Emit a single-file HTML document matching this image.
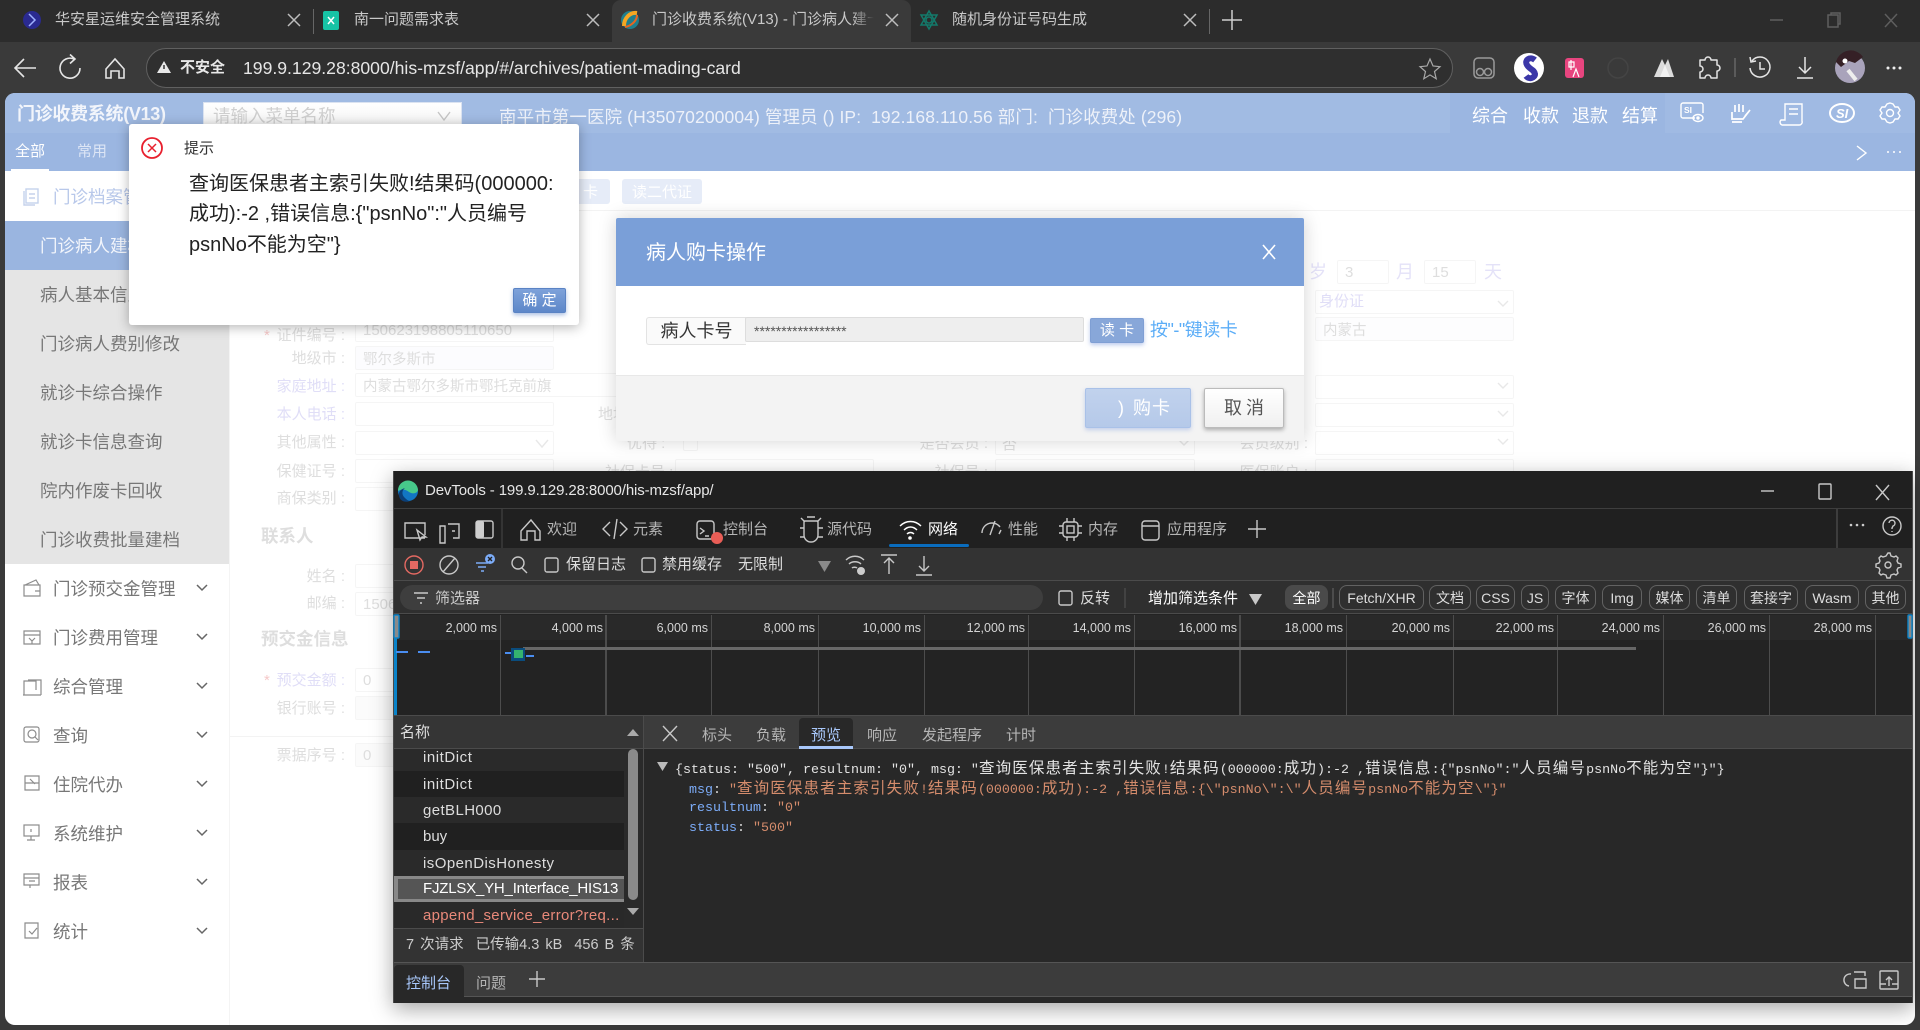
<!DOCTYPE html>
<html lang="zh-CN"><head><meta charset="utf-8"><title>门诊收费系统(V13)</title>
<style>
*{box-sizing:border-box}
html,body{margin:0;width:1920px;height:1030px;overflow:hidden;background:#3a3a3a;font-family:"Liberation Sans","Noto Sans CJK SC",sans-serif}
.t,.r,.b{position:absolute;white-space:nowrap;line-height:20px}
.b{display:block}
.r{text-align:right}
.sv{position:absolute;left:0;top:0;width:1920px;height:1030px}
.m{font-family:"Liberation Mono","Noto Sans CJK SC",monospace;font-size:13.33px}
.c{font-size:15.5px;letter-spacing:1.13px}
.in{position:absolute;border:1px solid #f5f5f5;border-radius:2px;height:24px}
.lb{position:absolute;white-space:nowrap;line-height:20px;color:#dedede;font-size:15px;text-align:right;width:110px}
.pu{color:#e0def7}
.sb{position:absolute;left:40px;font-size:17.5px;color:#777;white-space:nowrap;line-height:20px}
.st{position:absolute;left:53px;font-size:17.5px;color:#777;white-space:nowrap;line-height:20px}
.tab{position:absolute;font-size:15px;color:#c9c9c9;white-space:nowrap;line-height:20px}
.chip{position:absolute;top:585px;height:25px;border:1px solid #626262;border-radius:8px;color:#ddd;font-size:14px;line-height:25px;text-align:center;white-space:nowrap}
.rw{position:absolute;left:394px;width:230px;height:26px;font-size:15px;line-height:27px;padding-left:29px;color:#ddd;white-space:nowrap;overflow:hidden}
.dt{position:absolute;font-size:15px;color:#b5b5b5;white-space:nowrap;line-height:20px}
</style></head><body>

<!-- browser chrome -->
<div class="b" style="left:0;top:0;width:1920px;height:42px;background:#2c2c2c"></div>
<div class="b" style="left:612px;top:0;width:299px;height:42px;background:#3a3a3a;border-radius:9px 9px 0 0"></div>
<div class="b" style="left:313px;top:9px;width:1px;height:25px;background:#666"></div>
<div class="b" style="left:1209px;top:9px;width:1px;height:25px;background:#666"></div>
<span class="tab" style="left:55px;top:10px">华安星运维安全管理系统</span>
<span class="tab" style="left:354px;top:10px">南一问题需求表</span>
<span class="tab" style="left:652px;top:10px;width:222px;overflow:hidden;-webkit-mask-image:linear-gradient(90deg,#000 90%,transparent)">门诊收费系统(V13) - 门诊病人建卡</span>
<span class="tab" style="left:952px;top:10px">随机身份证号码生成</span>
<div class="b" style="left:146px;top:48px;width:1307px;height:40px;border:1.5px solid #606060;border-radius:20px;background:#2f2f2f"></div>
<span class="t" style="left:180px;top:58px;font-size:15px;font-weight:bold;color:#e8e8e8">不安全</span>
<span class="t" style="left:243px;top:58px;font-size:17.6px;color:#e6e6e6">199.9.129.28:8000/his-mzsf/app/#/archives/patient-mading-card</span>

<svg class="sv" viewBox="0 0 1920 1030" fill="none" stroke="#cfcfcf" stroke-width="1.5">
<circle cx="32" cy="20" r="9" fill="#2a2a90" stroke="none"/><path d="M29 14l6 6-6 6" stroke="#9fb0ff"/>
<path d="M288 14l12 12M300 14l-12 12M587 14l12 12M599 14l-12 12M886 14l12 12M898 14l-12 12M1184 14l12 12M1196 14l-12 12" stroke="#bdbdbd"/>
<rect x="323" y="11" width="16" height="19" rx="2" fill="#17c3a5" stroke="none"/><path d="M328 17l6 7M334 17l-6 7" stroke="#fff"/>
<circle cx="630" cy="20" r="9" fill="#1f7f8d" stroke="none"/><path d="M624 26c0-8 6-14 13-13" stroke="#f5a623" stroke-width="4"/><path d="M637 15c0 6-6 11-12 12" stroke="#e9641f" stroke-width="2"/>
<g stroke="#137a6b"><path d="M929 11l8 14h-16zM929 29l8-14h-16z"/><circle cx="929" cy="20" r="3"/></g>
<path d="M1232 10v20M1222 20h20" stroke-width="1.5"/>
<g stroke="#5e5e5e"><path d="M1770 20h13"/><rect x="1828" y="15" width="10" height="12"/><path d="M1831 15v-2h9v11h-2M1885 14l12 13M1897 14l-12 13"/></g>
<!-- nav -->
<path d="M36 68H16M24 59l-9 9 9 9" stroke="#e5e5e5" stroke-width="1.6"/>
<path d="M74 59A10 10 0 1 0 80 68M70 54.500l5 4.500-5 4.500" stroke="#e5e5e5" stroke-width="1.6"/>
<path d="M106 69l9-10 9 10v9h-5v-7h-8v7h-5z" stroke="#e5e5e5" stroke-width="1.6"/>
<path d="M164 61l7 12h-14z" fill="#e8e8e8" stroke="none"/><path d="M164 65v4" stroke="#333"/>
<path d="M1430 59l3 7 7 .7-5.500 4.800 1.700 7.200-6.200-3.800-6.200 3.800 1.700-7.200-5.500-4.800 7-.7z" stroke="#a8a8a8" stroke-width="1.2"/>
<rect x="1474" y="58" width="20" height="20" rx="4" stroke="#9a9a9a"/><circle cx="1480" cy="72" r="3.500" stroke="#9a9a9a"/><circle cx="1488" cy="72" r="3.500" stroke="#9a9a9a"/>
<circle cx="1529" cy="68" r="15" fill="#fff" stroke="none"/><path d="M1535 60c-5-4-11 0-8 5s7 4 8 9c0 4-6 6-9 2" stroke="#3b37a8" stroke-width="6"/>
<rect x="1565" y="58" width="19" height="20" rx="3" fill="#e8457f" stroke="none"/><path d="M1569 62h5v5h-5zM1571 60v10M1573 77l3-8 3 8" stroke="#fff" stroke-width="1.2"/>
<circle cx="1618" cy="68" r="10" stroke="#444"/>
<path d="M1654 77L1662 59L1665 65L1668 59L1674 77z" fill="#dcdcdc" stroke="none"/><path d="M1665 65l-5 12h10z" fill="#f2f2f2" stroke="none"/>
<path d="M1705 60a3 3 0 0 1 6 0h6v5a3 3 0 0 1 0 6v7h-6a3 3 0 0 0-6 0h-5v-6a3 3 0 0 0 0-6v-6z" stroke="#e5e5e5" stroke-linejoin="round"/>
<path d="M1735 58v19" stroke="#666"/>
<path d="M1752 61a10 10 0 1 1-2 7M1750 57l1 5 5-1M1760 62v7h5" stroke="#e5e5e5"/>
<path d="M1805 57v16M1799 67l6 6 6-6M1797 78h16" stroke="#e5e5e5"/>
<circle cx="1850" cy="68" r="15" fill="#a9a3bb" stroke="none"/><path d="M1836 62a15 15 0 0 1 27-5l-8 6-6-2-8 6z" fill="#352026" stroke="none"/><circle cx="1845" cy="61" r="2.500" fill="#fff" stroke="none"/><path d="M1848 70l8 10" stroke="#eee" stroke-width="4"/>
<g fill="#eee" stroke="none"><circle cx="1888" cy="68" r="1.500"/><circle cx="1894" cy="68" r="1.500"/><circle cx="1900" cy="68" r="1.500"/></g>
</svg>

<!-- app -->
<div class="b" style="left:5px;top:93px;width:1910px;height:932px;background:#fff;border-radius:10px;overflow:hidden"></div>
<div class="b" style="left:5px;top:93px;width:1910px;height:78px;background:#9bb6e1;border-radius:10px 10px 0 0"></div>
<div class="b" style="left:5px;top:93px;width:1445px;height:40px;background:#a1bbe3;border-radius:10px 0 0 0"></div>
<div class="b" style="left:1665px;top:93px;width:250px;height:40px;background:#a0bae3;border-radius:0 10px 0 0"></div>
<span class="t" style="left:17px;top:104px;font-size:18px;font-weight:bold;color:#f2f5fb;letter-spacing:-.3px">门诊收费系统(V13)</span>
<div class="b" style="left:203px;top:102px;width:259px;height:32px;background:linear-gradient(#fff,#f0f0f0);border:1px solid #dbe3f1"></div>
<span class="t" style="left:213px;top:106px;font-size:17.5px;color:#cfcfcf">请输入菜单名称</span>
<span class="t" style="left:499px;top:107px;font-size:17.5px;color:#edf1f9;letter-spacing:.1px">南平市第一医院 (H35070200004) 管理员 () IP:&nbsp; 192.168.110.56 部门:&nbsp; 门诊收费处 (296)</span>
<span class="t" style="left:1472px;top:106px;font-size:18px;color:#fff">综合</span>
<span class="t" style="left:1523px;top:106px;font-size:18px;color:#fff">收款</span>
<span class="t" style="left:1572px;top:106px;font-size:18px;color:#fff">退款</span>
<span class="t" style="left:1622px;top:106px;font-size:18px;color:#fff">结算</span>
<span class="t" style="left:15px;top:142px;font-size:15px;color:#fff">全部</span>
<span class="t" style="left:77px;top:142px;font-size:15px;color:#dce5f5">常用</span>
<div class="b" style="left:11px;top:169px;width:38px;height:2px;background:#fff"></div>

<!-- sidebar -->
<div class="b" style="left:5px;top:270px;width:224px;height:294px;background:#e5e5e5"></div>
<div class="b" style="left:5px;top:221px;width:224px;height:49px;background:#9ab5e0"></div>
<div class="b" style="left:229px;top:171px;width:1px;height:854px;background:#f4f4f4"></div>
<span class="st" style="top:187px;color:#b8c8ea">门诊档案管理</span>
<span class="sb" style="top:236px;color:#f2f5fb">门诊病人建档</span>
<span class="sb" style="top:285px">病人基本信息</span>
<span class="sb" style="top:334px">门诊病人费别修改</span>
<span class="sb" style="top:383px">就诊卡综合操作</span>
<span class="sb" style="top:432px">就诊卡信息查询</span>
<span class="sb" style="top:481px">院内作废卡回收</span>
<span class="sb" style="top:530px">门诊收费批量建档</span>
<span class="st" style="top:579px">门诊预交金管理</span>
<span class="st" style="top:628px">门诊费用管理</span>
<span class="st" style="top:677px">综合管理</span>
<span class="st" style="top:726px">查询</span>
<span class="st" style="top:775px">住院代办</span>
<span class="st" style="top:824px">系统维护</span>
<span class="st" style="top:873px">报表</span>
<span class="st" style="top:922px">统计</span>

<!-- faded form -->
<div class="b" style="left:230px;top:210px;width:1685px;height:1px;background:#f3f3f3"></div>
<div class="b" style="left:572px;top:179px;width:38px;height:25px;background:#e6ecf8;border-radius:3px"></div>
<span class="t" style="left:583px;top:183px;font-size:15px;color:#fff">卡</span>
<div class="b" style="left:622px;top:179px;width:80px;height:25px;background:#e6ecf8;border-radius:3px"></div>
<span class="t" style="left:632px;top:183px;font-size:15px;color:#fff">读二代证</span>
<div class="b" style="left:230px;top:736px;width:370px;height:1px;background:#f3f3f3"></div>

<span class="lb" style="left:235px;top:326px">证件编号 :</span><span class="t" style="left:264px;top:326px;font-size:15px;color:#f6c9c9">*</span>
<span class="lb" style="left:235px;top:349px">地级市 :</span>
<span class="lb pu" style="left:235px;top:377px">家庭地址 :</span>
<span class="lb pu" style="left:235px;top:405px">本人电话 :</span>
<span class="lb" style="left:235px;top:433px">其他属性 :</span>
<span class="lb" style="left:235px;top:462px">保健证号 :</span>
<span class="lb" style="left:235px;top:489px">商保类别 :</span>
<span class="t" style="left:261px;top:526px;font-size:17.5px;font-weight:bold;color:#dedede">联系人</span>
<span class="lb" style="left:235px;top:567px">姓名 :</span>
<span class="lb" style="left:235px;top:594px">邮编 :</span>
<span class="t" style="left:261px;top:629px;font-size:17.5px;font-weight:bold;color:#dedede">预交金信息</span>
<span class="lb pu" style="left:235px;top:671px">预交金额 :</span><span class="t" style="left:264px;top:671px;font-size:15px;color:#f6c9c9">*</span>
<span class="lb" style="left:235px;top:699px">银行账号 :</span>
<span class="lb" style="left:235px;top:746px">票据序号 :</span>

<div class="in" style="left:355px;top:318px;width:199px"></div><span class="t" style="left:363px;top:321px;font-size:15px;color:#dedede">150623198805110650</span>
<div class="in" style="left:355px;top:346px;width:199px;background:#fcfcfe"></div><span class="t" style="left:363px;top:350px;font-size:14.5px;color:#dedede">鄂尔多斯市</span>
<div class="in" style="left:355px;top:373px;width:400px"></div><span class="t" style="left:363px;top:377px;font-size:14.5px;color:#dedede">内蒙古鄂尔多斯市鄂托克前旗</span>
<div class="in" style="left:355px;top:402px;width:199px"></div>
<div class="in" style="left:355px;top:431px;width:199px"></div>
<div class="in" style="left:355px;top:459px;width:199px"></div>
<div class="in" style="left:355px;top:487px;width:199px"></div>
<div class="in" style="left:355px;top:564px;width:199px"></div>
<div class="in" style="left:355px;top:592px;width:199px"></div><span class="t" style="left:363px;top:595px;font-size:15px;color:#dedede">150600</span>
<div class="in" style="left:355px;top:668px;width:199px"></div><span class="t" style="left:363px;top:671px;font-size:15px;color:#dedede">0</span>
<div class="in" style="left:355px;top:696px;width:199px;background:#fbfbfb"></div>
<div class="in" style="left:355px;top:743px;width:199px;background:#fbfbfb"></div><span class="t" style="left:363px;top:746px;font-size:15px;color:#dedede">0</span>

<span class="t" style="left:598px;top:405px;font-size:15px;color:#dedede">地址</span>
<span class="t" style="left:627px;top:434px;font-size:15px;color:#dedede">优待 :</span>
<div class="in" style="left:683px;top:436px;width:15px;height:15px"></div>
<span class="t" style="left:605px;top:463px;font-size:15px;color:#dedede">社保卡号 :</span>
<div class="in" style="left:675px;top:459px;width:199px"></div>
<span class="r" style="left:900px;width:88px;top:434px;font-size:15px;color:#dedede">是否会员 :</span>
<div class="in" style="left:995px;top:431px;width:200px"></div><span class="t" style="left:1002px;top:435px;font-size:15px;color:#dedede">否</span>
<span class="r" style="left:900px;width:88px;top:463px;font-size:15px;color:#dedede">社保号 :</span>
<div class="in" style="left:995px;top:459px;width:200px"></div>
<span class="r" style="left:1220px;width:88px;top:434px;font-size:15px;color:#dedede">会员级别 :</span>
<span class="r" style="left:1220px;width:88px;top:463px;font-size:15px;color:#dedede">医保账户 :</span>
<span class="t" style="left:1309px;top:262px;font-size:18px;color:#e4e2f8">岁</span>
<div class="in" style="left:1337px;top:260px;width:52px"></div><span class="t" style="left:1345px;top:263px;font-size:15px;color:#dedede">3</span>
<span class="t" style="left:1396px;top:262px;font-size:18px;color:#e4e2f8">月</span>
<div class="in" style="left:1424px;top:260px;width:52px"></div><span class="t" style="left:1432px;top:263px;font-size:15px;color:#dedede">15</span>
<span class="t" style="left:1484px;top:262px;font-size:18px;color:#e4e2f8">天</span>
<div class="in" style="left:1315px;top:290px;width:199px"></div><span class="t" style="left:1319px;top:292px;font-size:15px;color:#e0def7">身份证</span>
<div class="in" style="left:1315px;top:317px;width:199px;background:#fdfdfe"></div><span class="t" style="left:1323px;top:321px;font-size:14.5px;color:#dedede">内蒙古</span>
<div class="in" style="left:1315px;top:375px;width:199px"></div>
<div class="in" style="left:1315px;top:403px;width:199px"></div>
<div class="in" style="left:1315px;top:431px;width:199px"></div>
<div class="in" style="left:1315px;top:459px;width:199px"></div>

<svg class="sv" viewBox="0 0 1920 1030" fill="none" stroke="#8f8f8f" stroke-width="1.4">
<path d="M438 112l6 8 6-8" stroke="#c5c5c5"/>
<g stroke="#fff"><path d="M1695 118h-12a2 2 0 0 1-2-2v-11a2 2 0 0 1 2-2h18a2 2 0 0 1 2 2v8"/><ellipse cx="1698" cy="118" rx="5" ry="3.500"/><circle cx="1698" cy="118" r="1" fill="#fff"/>
<path d="M1732 112v7h11l7-9-5 6M1735 105v7M1739 104v8M1743 105v7M1732 122h10" stroke-width="1.700"/>
<path d="M1785 125h-3a3 3 0 0 1-1-5h4v-16h17v17a3 3 0 0 1-3 4h-14zM1789 109h9M1789 114h9"/>
<ellipse cx="1842" cy="113" rx="12" ry="9" stroke-width="2"/>
<path d="M1890 103l3 1 2 3 3 0 2 3-2 3 2 3-2 3-3 0-2 3-3 1-3-1-2-3-3 0-2-3 2-3-2-3 2-3 3 0 2-3z"/><circle cx="1890" cy="113" r="3.500"/>
<path d="M1857 146l9 7-9 7"/></g>
<text x="1684" y="113" font-family="Liberation Sans" font-size="8.500" font-weight="bold" fill="#fff" stroke="none">SI</text>
<text x="1836" y="118" font-family="Liberation Sans" font-size="13" font-weight="bold" font-style="italic" fill="#fff" stroke="none">SI</text>
<g fill="#fff" stroke="none"><circle cx="1888" cy="152" r="1"/><circle cx="1894" cy="152" r="1"/><circle cx="1900" cy="152" r="1"/></g>
<g stroke="#c5d2ec"><rect x="26" y="189" width="12" height="14"/><path d="M29 194h6M29 198h6M24 191v14h11"/></g>
<g stroke="#8c8c8c" stroke-width="1.200">
<path d="M24 585h16v11H24zM25 585l11-5 3 5M35 591h5"/><path d="M24 631h16v13H24zM24 635h16M29 638l3 3 3-3M32 641v3"/>
<path d="M23 695h18M24 695v-14h12v9M28 680h13v15"/><rect x="24" y="727" width="15" height="15" rx="2"/><circle cx="32" cy="734" r="4"/><path d="M35 737l3 3"/>
<path d="M25 776h14v14H25zM25 783h14M30 779l5 5"/><rect x="24" y="825" width="15" height="11"/><path d="M31 836v4M27 840h8M31 829v3"/>
<path d="M24 874h15v11H24zM24 878h15M29 881h6M30 885v3"/><path d="M25 923h13v15H25zM29 931l3 3 5-6"/></g>
<g stroke="#666" stroke-width="1.500"><path d="M197 585l5 5 5-5M197 634l5 5 5-5M197 683l5 5 5-5M197 732l5 5 5-5M197 781l5 5 5-5M197 830l5 5 5-5M197 879l5 5 5-5M197 928l5 5 5-5"/></g>
<g stroke="#e8e8e8"><path d="M536 440l6 7 6-7M1508 301l-5 5-5-5M1508 383l-5 5-5-5M1508 411l-5 5-5-5M1508 439l-5 5-5-5M1189 440l-5 5-5-5"/></g>
</svg>

<!-- error dialog -->
<div class="b" style="left:129px;top:124px;width:450px;height:201px;background:#fff;border-radius:3px;box-shadow:0 2px 12px rgba(0,0,0,.3)"></div>
<svg class="sv" viewBox="0 0 1920 1030" fill="none"><circle cx="152" cy="148" r="10" stroke="#e8202e" stroke-width="1.800"/><path d="M148 144l8 8M156 144l-8 8" stroke="#e8202e" stroke-width="1.500"/></svg>
<span class="t" style="left:184px;top:139px;font-size:15px;color:#333">提示</span>
<div class="b" style="left:189px;top:168.500px;width:366px;font-size:20px;line-height:30.5px;color:#222;white-space:normal;word-break:break-all">查询医保患者主索引失败!结果码(000000:<br>成功):-2 ,错误信息:{"psnNo":"人员编号<br>psnNo不能为空"}</div>
<div class="b" style="left:513px;top:288px;width:53px;height:25px;background:linear-gradient(#7ea2da,#5d87c9);border:1px solid #5a83c4;border-radius:2px;box-shadow:0 2px 4px rgba(90,130,200,.5);color:#fff;font-size:15px;line-height:24px;text-align:center">确 定</div>

<!-- purchase dialog -->
<div class="b" style="left:616px;top:218px;width:688px;height:223px;background:#fff;border-radius:2px;box-shadow:0 0 18px rgba(0,0,0,.18)"></div>
<div class="b" style="left:616px;top:218px;width:688px;height:68px;background:#7a9fd8;border-radius:2px 2px 0 0"></div>
<span class="t" style="left:646px;top:243px;font-size:20px;color:#fff">病人购卡操作</span>
<svg class="sv" viewBox="0 0 1920 1030" fill="none"><path d="M1263 245l12 14M1275 245l-12 14" stroke="#fff" stroke-width="1.600"/></svg>
<div class="b" style="left:646px;top:317px;width:100px;height:28px;background:#fafafa;border:1px solid #e3e3e3;border-right:0;border-radius:3px 0 0 3px;font-size:18px;line-height:26px;text-align:center;color:#333">病人卡号</div>
<div class="b" style="left:745px;top:317px;width:339px;height:25px;background:#eee;border:1px solid #ddd;border-radius:2px"></div>
<span class="t" style="left:754px;top:323px;font-size:14px;color:#555;line-height:16px">*****************</span>
<div class="b" style="left:1090px;top:318px;width:54px;height:25px;background:#88a7d9;border:1px solid #7f9fd4;border-radius:2px;box-shadow:0 2px 4px rgba(120,150,220,.5);color:#fff;font-size:15px;line-height:23px;text-align:center">读 卡</div>
<span class="t" style="left:1150px;top:320px;font-size:18px;color:#5badf7;letter-spacing:-.5px">按"-"键读卡</span>
<div class="b" style="left:616px;top:375px;width:688px;height:66px;background:#f3f3f3;border-top:1px solid #e8e8e8"></div>
<div class="b" style="left:1085px;top:388px;width:106px;height:40px;background:linear-gradient(#c1d2ed,#b5c9e9);border:1px solid #a9c1e8;border-radius:2px;box-shadow:0 2px 4px rgba(120,150,220,.4)"></div>
<span class="t" style="left:1118px;top:398px;font-size:18px;color:#fff">)</span>
<span class="t" style="left:1133px;top:398px;font-size:18px;color:#fff;letter-spacing:1px">购卡</span>
<div class="b" style="left:1204px;top:388px;width:80px;height:40px;background:linear-gradient(#fff,#f0f0f0);border:1px solid #bbb;border-radius:2px;box-shadow:0 2px 4px rgba(0,0,0,.3);color:#555;font-size:18px;line-height:38px;text-align:center;letter-spacing:4px;padding-left:4px">取消</div>

<!-- devtools -->
<div class="b" style="left:393px;top:471px;width:1520px;height:532px;background:#232323;box-shadow:0 6px 20px rgba(0,0,0,.35);border:1px solid #4a4a4a;border-top:0"></div>
<div class="b" style="left:394px;top:471px;width:1518px;height:37px;background:#202020"></div>
<div class="b" style="left:394px;top:508px;width:1518px;height:1px;background:#3e3e3e"></div>
<div class="b" style="left:394px;top:509px;width:1518px;height:39px;background:#202020"></div>
<div class="b" style="left:394px;top:548px;width:1518px;height:32px;background:#333"></div>
<div class="b" style="left:394px;top:580px;width:1518px;height:34px;background:#2f2f2f;border-top:1px solid #4b4b4b;border-bottom:1px solid #4b4b4b"></div>
<div class="b" style="left:400px;top:585px;width:643px;height:25px;background:#3e3e3e;border-radius:13px"></div>
<div class="b" style="left:394px;top:615px;width:1518px;height:25px;background:#292929"></div>
<div class="b" style="left:394px;top:715px;width:1518px;height:1px;background:#4b4b4b"></div>
<div class="b" style="left:889px;top:544px;width:80px;height:3px;background:#0a6cbd;border-radius:2px"></div>
<span class="t" style="left:425px;top:481px;font-size:15px;color:#e6e6e6;letter-spacing:-.12px">DevTools - 199.9.129.28:8000/his-mzsf/app/</span>
<span class="dt" style="left:547px;top:520px">欢迎</span><span class="dt" style="left:633px;top:520px">元素</span><span class="dt" style="left:723px;top:520px">控制台</span><span class="dt" style="left:827px;top:520px">源代码</span><span class="dt" style="left:928px;top:520px;color:#fff">网络</span><span class="dt" style="left:1008px;top:520px">性能</span><span class="dt" style="left:1088px;top:520px">内存</span><span class="dt" style="left:1167px;top:520px">应用程序</span>
<span class="dt" style="left:566px;top:555px;color:#ddd">保留日志</span><span class="dt" style="left:662px;top:555px;color:#ddd">禁用缓存</span><span class="dt" style="left:738px;top:555px;color:#ddd">无限制</span>
<span class="dt" style="left:435px;top:589px;color:#ccc">筛选器</span><span class="dt" style="left:1080px;top:589px;color:#ddd">反转</span><span class="dt" style="left:1148px;top:589px;color:#fff">增加筛选条件</span>
<div class="chip" style="left:1285px;width:43px;background:#4a4a4a;border-color:#4a4a4a;color:#fff">全部</div>
<div class="chip" style="left:1339px;width:85px">Fetch/XHR</div><div class="chip" style="left:1429px;width:42px">文档</div><div class="chip" style="left:1476px;width:39px">CSS</div><div class="chip" style="left:1521px;width:28px">JS</div><div class="chip" style="left:1555px;width:41px">字体</div><div class="chip" style="left:1602px;width:40px">Img</div><div class="chip" style="left:1649px;width:41px">媒体</div><div class="chip" style="left:1696px;width:41px">清单</div><div class="chip" style="left:1744px;width:54px">套接字</div><div class="chip" style="left:1805px;width:54px">Wasm</div><div class="chip" style="left:1865px;width:41px">其他</div>

<svg class="sv" viewBox="0 0 1920 1030" fill="none" stroke="#c8c8c8" stroke-width="1.400" font-family="Liberation Sans" font-size="12.500">
<circle cx="408" cy="491" r="10" fill="#1276c4" stroke="none"/><path d="M398 491a10 10 0 0 1 20-1c-1 4-6 4-9 2-3-3-8-3-11-1z" fill="#47c98a" stroke="none"/><path d="M404 497a6 6 0 0 1 1-9c-4 1-7 4-6 8 1 5 6 7 11 5-2 0-4-2-6-4z" fill="#0b3f78" stroke="none"/>
<path d="M1761 491h13"/><rect x="1819" y="484" width="12" height="15" rx="1"/><path d="M1876 485l13 15M1889 485l-13 15"/>
<path d="M502 509v39" stroke="#3e3e3e"/><path d="M1837 509v39" stroke="#4a4a4a"/>
<path d="M425 538h-20v-15h20v12M417 530l3 10 2-3 4 0z"/><path d="M440 526h5v17h-5zM448 524h11v14h-6M452 531h3"/><rect x="476" y="521" width="17" height="17" rx="2"/><rect x="476" y="521" width="8" height="17" rx="2" fill="#cfcfcf" stroke="none"/>
<path d="M521 531l10-11 9 11v9h-5v-9h-8v9h-6z"/>
<path d="M610 522l-7 7 7 7M620 522l7 7-7 7M617 519l-3 20"/>
<rect x="697" y="521" width="17" height="18" rx="3"/><path d="M700 528l4 3-4 3M705 536h4"/><circle cx="717" cy="538" r="6" fill="#e85d56" stroke="none"/>
<g transform="translate(0 -4)"><path d="M804 525h14v14a7 7 0 0 1-14 0zM801 522l4 4M821 522l-4 4M800 532h4M818 532h5M800 541h4M818 541h5M807 521h8"/></g>
<path d="M900 526c6-6 15-6 21 0M904 530c4-4 9-4 13 0M907 534c2-2 5-2 7 0" stroke="#fff"/><circle cx="910" cy="538" r="1.800" fill="#fff" stroke="none"/>
<g transform="translate(0 -3)"><path d="M982 536a10 10 0 0 1 18-6M990 538l5-14M1001 533l-2 4"/></g>
<rect x="1063" y="522" width="15" height="15" rx="3"/><rect x="1067" y="526" width="7" height="7"/><path d="M1067 518v4M1074 518v4M1067 537v4M1074 537v4M1059 526h4M1059 533h4M1078 526h4M1078 533h4"/>
<rect x="1142" y="521" width="17" height="19" rx="3"/><path d="M1142 526h17"/>
<path d="M1257 520v18M1248 529h18"/><g fill="#ccc" stroke="none"><circle cx="1851" cy="525" r="1.300"/><circle cx="1857" cy="525" r="1.300"/><circle cx="1863" cy="525" r="1.300"/></g>
<circle cx="1892" cy="526" r="9"/><path d="M1889 523a3 3 0 1 1 4 3l-1 2v1M1892 531v1"/>
<!-- toolbar -->
<circle cx="414" cy="565" r="9" stroke="#e46962"/><rect x="410" y="561" width="8" height="8" fill="#e46962" stroke="none"/>
<circle cx="449" cy="565" r="9"/><path d="M443 572l12-14"/>
<path d="M476 563h12M478 567h8M481 571h3" stroke="#7cacf8" stroke-width="1.600"/><circle cx="490" cy="559" r="5" fill="#7cacf8" stroke="none"/><path d="M488 557l4 4M492 557l-4 4" stroke="#222"/>
<circle cx="518" cy="563" r="6"/><path d="M522 568l5 5"/>
<rect x="545" y="558" width="13" height="14" rx="2"/><rect x="642" y="558" width="13" height="14" rx="2"/>
<path d="M818 561h13l-6.500 11z" fill="#8a8a8a" stroke="none"/>
<path d="M846 560c5-5 13-5 18 0M849 564c3-3 9-3 12 0M852 568c1-1 4-1 5 0"/><circle cx="861" cy="571" r="4" fill="#ccc" stroke="none"/>
<path d="M881 555h16M889 574v-16M884 563l5-5 5 5M924 556v15M919 566l5 5 5-5M916 575h16"/>
<g transform="translate(0 -3)"><path d="M1888 556l2 0 1 3 3 1 2-1 2 2-1 3 1 2 3 1 0 3-3 1-1 2 1 3-2 2-2-1-3 1-1 3-3 0-1-3-3-1-2 1-2-2 1-3-1-2-3-1 0-3 3-1 1-2-1-3 2-2 2 1 3-1z"/><circle cx="1888" cy="568" r="3"/></g>
<path d="M414 593h14M417 598h8M420 603h2" stroke="#c8c8c8"/>
<rect x="1059" y="591" width="13" height="14" rx="2"/><path d="M1125 588v20" stroke="#4b4b4b"/><path d="M1333 588v20" stroke="#5a5a5a"/>
<path d="M1249 594h13l-6.500 11z" fill="#c8c8c8" stroke="none"/>
<!-- timeline -->
<g stroke="#4c4c4c" stroke-width="1"><path d="M500.500 615v100M711.500 615v100M818.500 615v100M924.500 615v100M1028.500 615v100M1134.500 615v100M1346.500 615v100M1453.500 615v100M1557.500 615v100M1663.500 615v100M1769.500 615v100M1875.500 615v100"/><path d="M606 615v100M1240 615v100" stroke-width="2"/></g>
<g fill="#d5d5d5" stroke="none" text-anchor="end"><text x="497" y="632">2,000 ms</text><text x="603" y="632">4,000 ms</text><text x="708" y="632">6,000 ms</text><text x="815" y="632">8,000 ms</text><text x="921" y="632">10,000 ms</text><text x="1025" y="632">12,000 ms</text><text x="1131" y="632">14,000 ms</text><text x="1237" y="632">16,000 ms</text><text x="1343" y="632">18,000 ms</text><text x="1450" y="632">20,000 ms</text><text x="1554" y="632">22,000 ms</text><text x="1660" y="632">24,000 ms</text><text x="1766" y="632">26,000 ms</text><text x="1872" y="632">28,000 ms</text></g>
<path d="M523 648.500H1636" stroke="#666" stroke-width="3"/>
<rect x="394" y="615" width="3" height="100" fill="#0a83c9" stroke="none"/><rect x="394" y="615" width="5" height="23" rx="1" fill="#8a8a8a" stroke="#0a83c9"/><rect x="1908" y="615" width="4" height="23" rx="1" fill="#8a8a8a" stroke="#0a83c9"/>
<path d="M396 652h12M418 652h12" stroke="#4a8df0" stroke-width="2"/>
<rect x="511" y="648" width="14" height="13" fill="#0a4c7d" stroke="none"/><rect x="514" y="650" width="9" height="8" fill="#35b36f" stroke="none"/>
<path d="M505 653h6M526 656h8" stroke="#4a8df0" stroke-width="2"/>
</svg>

<!-- lower -->
<div class="b" style="left:394px;top:716px;width:250px;height:33px;background:#353535;border-bottom:1px solid #4b4b4b"></div>
<span class="t" style="left:400px;top:723px;font-size:15px;color:#ddd">名称</span>
<div class="b" style="left:624px;top:749px;width:19px;height:179px;background:#2a2a2a"></div>
<div class="rw" style="top:749px;height:22px;background:#2a2a2a;line-height:18px;letter-spacing:.55px">initDict</div>
<div class="rw" style="top:771px;background:#202020;letter-spacing:.55px">initDict</div>
<div class="rw" style="top:797px;background:#2a2a2a;letter-spacing:.4px">getBLH000</div>
<div class="rw" style="top:823px;height:27px;background:#202020">buy</div>
<div class="rw" style="top:850px;background:#2a2a2a;letter-spacing:.45px">isOpenDisHonesty</div>
<div class="rw" style="top:876px;background:#555;border:solid #888;border-width:3px 0 3px 4px;color:#fff;padding-left:25px;line-height:20px;letter-spacing:-.2px">FJZLSX_YH_Interface_HIS13</div>
<div class="rw" style="top:902px;background:#292929;color:#e9897a;letter-spacing:.3px">append_service_error?req...</div>
<div class="b" style="left:394px;top:928px;width:250px;height:34px;background:#333;border-top:1px solid #4b4b4b"></div>
<span class="dt" style="left:406px;top:935px;color:#ccc;width:234px;overflow:hidden;font-size:14.5px;word-spacing:2px">7 次请求&nbsp; 已传输4.3 kB&nbsp; 456 B 条</span>
<div class="b" style="left:643px;top:716px;width:1269px;height:33px;background:#3c3c3c;border-left:1px solid #4b4b4b;border-bottom:1px solid #4b4b4b"></div>
<div class="b" style="left:799px;top:718px;width:54px;height:31px;background:#282828;border-radius:4px 4px 0 0;border-bottom:3px solid #a8c7fa"></div>
<span class="dt" style="left:702px;top:726px">标头</span><span class="dt" style="left:756px;top:726px">负载</span><span class="dt" style="left:811px;top:726px;color:#a8c7fa">预览</span><span class="dt" style="left:867px;top:726px">响应</span><span class="dt" style="left:922px;top:726px">发起程序</span><span class="dt" style="left:1006px;top:726px">计时</span>
<div class="b" style="left:643px;top:749px;width:1269px;height:213px;background:#282828;border-left:1px solid #4b4b4b"></div>
<span class="t m" style="left:675px;top:759px;color:#e3e3e3">{status: "500", resultnum: "0", msg: "<span class="c">查询医保患者主索引失败</span>!<span class="c">结果码</span>(000000:<span class="c">成功</span>):-2 ,<span class="c">错误信息</span>:{"psnNo":"<span class="c">人员编号</span>psnNo<span class="c">不能为空</span>"}"}</span>
<span class="t m" style="left:689px;top:779px;color:#d58c6c"><span style="color:#7cacf8">msg</span><span style="color:#ddd">:</span> "<span class="c">查询医保患者主索引失败</span>!<span class="c">结果码</span>(000000:<span class="c">成功</span>):-2 ,<span class="c">错误信息</span>:{\"psnNo\":\"<span class="c">人员编号</span>psnNo<span class="c">不能为空</span>\"}"</span>
<span class="t m" style="left:689px;top:799px;color:#d58c6c"><span style="color:#7cacf8">resultnum</span><span style="color:#ddd">:</span> "0"</span>
<span class="t m" style="left:689px;top:819px;color:#d58c6c"><span style="color:#7cacf8">status</span><span style="color:#ddd">:</span> "500"</span>
<div class="b" style="left:394px;top:962px;width:1518px;height:34px;background:#3c3c3c;border-top:1px solid #555"></div>
<div class="b" style="left:394px;top:996px;width:1518px;height:7px;background:#282828;border-top:1px solid #555"></div>
<div class="b" style="left:394px;top:965px;width:70px;height:32px;background:#282828;border-radius:4px 4px 0 0"></div>
<span class="dt" style="left:406px;top:974px;color:#a8c7fa">控制台</span><span class="dt" style="left:476px;top:974px">问题</span>
<svg class="sv" viewBox="0 0 1920 1030" fill="none" stroke="#c8c8c8" stroke-width="1.400">
<path d="M627 736h12l-6-7z" fill="#aaa" stroke="none"/><rect x="628" y="749" width="10" height="151" rx="5" fill="#8a8a8a" stroke="none"/><path d="M627 908h12l-6 7z" fill="#aaa" stroke="none"/>
<path d="M663 726l14 15M677 726l-14 15"/>
<path d="M657 762h11l-5.500 9z" fill="#bbb" stroke="none"/>
<path d="M537 971v16M529 979h16"/>
<path d="M1851 974a6 6 0 0 0-2 12M1854 972h11v4M1855 979h11v9h-11z"/><rect x="1880" y="971" width="18" height="18" rx="1"/><path d="M1880 984h6M1892 984h6M1889 986v-9M1886 980l3-3 3 3"/>
</svg>
</body></html>
